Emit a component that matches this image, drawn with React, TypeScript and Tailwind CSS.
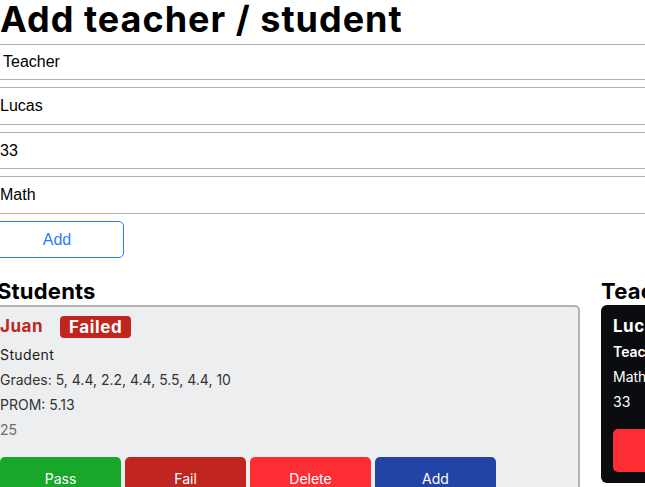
import { useState } from "react";

const grades = [5, 4.4, 2.2, 4.4, 5.5, 4.4, 10];

function prom(list: number[]) {
  return (list.reduce((a, b) => a + b, 0) / list.length).toFixed(2);
}

export default function App() {
  const [role, setRole] = useState("Teacher");
  const [name, setName] = useState("Lucas");
  const [age, setAge] = useState("33");
  const [subject, setSubject] = useState("Math");

  const font = { fontFamily: "Inter, 'Noto Sans', sans-serif" };

  return (
    <div className="w-[645px] h-[487px] overflow-hidden bg-white" style={font}>
      <h1 className="text-[36px] font-bold leading-[40px] text-black mt-[-1px] tracking-[1px]">
        Add teacher / student
      </h1>

      {/* form */}
      <div className="flex flex-col gap-[7px] mt-[5px] font-['Liberation_Sans',Arial,sans-serif]">
        <select
          value={role}
          onChange={(e) => setRole(e.target.value)}
          className="appearance-none w-[700px] h-[36px] border-y border-[#b3b3b3] pl-[3px] text-[16px] text-black bg-white outline-none"
        >
          <option>Teacher</option>
          <option>Student</option>
        </select>
        <input
          value={name}
          onChange={(e) => setName(e.target.value)}
          className="w-[700px] h-[38px] border-y border-[#b3b3b3] px-0 text-[16px] text-black outline-none"
        />
        <input
          value={age}
          onChange={(e) => setAge(e.target.value)}
          className="w-[700px] h-[37px] border-y border-[#b3b3b3] px-0 text-[16px] text-black outline-none"
        />
        <input
          value={subject}
          onChange={(e) => setSubject(e.target.value)}
          className="w-[700px] h-[38px] border-y border-[#b3b3b3] px-0 text-[16px] text-black outline-none"
        />
        <button className="-ml-[10px] w-[134px] h-[37px] border border-solid border-[color:#2b7bff] rounded-[5px] text-[16px] text-[#2b7bff] bg-white">
          Add
        </button>
      </div>

      {/* lists */}
      <div className="flex gap-[21px] -ml-[14px] mt-[20px]">
        <section className="w-[594px] shrink-0">
          <h2 className="pl-[11px] text-[22px] font-bold leading-[27px] text-black tracking-[0.2px]">Students</h2>
          <div className="border-2 border-[#b3b3b3] rounded-[5px] bg-[#edeef0] px-[12px] pt-[9px] pb-[12px]">
            <div className="flex items-center gap-[17px] h-[22px]">
              <span className="text-[17px] font-bold text-[#c0261f] tracking-[0.5px]">Juan</span>
              <span className="bg-[#c0261f] text-white text-[17px] font-bold rounded-[4px] px-[9px] h-[22px] leading-[22px] tracking-[0.6px]">
                Failed
              </span>
            </div>
            <div className="mt-[4px] text-[14px] leading-[25px]">
              <p className="text-[#1a1a1a] tracking-[0.4px]">Student</p>
              <p className="text-[#333]">Grades: {grades.join(", ")}</p>
              <p className="text-[#333]">PROM: {prom(grades)}</p>
              <p className="text-[#6b6b6b]">25</p>
            </div>
            <div className="flex gap-[4px] mt-[15px]">
              <button className="w-[121px] h-[42px] rounded-[5px] bg-[#19a72a] text-white text-[14px]">Pass</button>
              <button className="w-[121px] h-[42px] rounded-[5px] bg-[#c0261f] text-white text-[14px]">Fail</button>
              <button className="w-[121px] h-[42px] rounded-[5px] bg-[#fc2e33] text-white text-[14px]">Delete</button>
              <button className="w-[121px] h-[42px] rounded-[5px] bg-[#2244a6] text-white text-[14px]">Add</button>
            </div>
          </div>
        </section>

        <section className="w-[200px] shrink-0">
          <h2 className="text-[22px] font-bold leading-[27px] text-black tracking-[0.2px]">Teachers</h2>
          <div className="bg-[#0b0c0f] rounded-[6px] px-[12px] pt-[8px] pb-[11px] text-white">
            <p className="text-[17px] font-bold leading-[26px] tracking-[0.5px]">Lucas</p>
            <p className="text-[14px] font-semibold leading-[25px]">Teacher</p>
            <p className="text-[14px] leading-[25px]">Math</p>
            <p className="text-[14px] leading-[25px]">33</p>
            <button className="mt-[15px] w-full h-[43px] rounded-[5px] bg-[#fc2e33] text-white text-[14px]">
              Delete
            </button>
          </div>
        </section>
      </div>
    </div>
  );
}
